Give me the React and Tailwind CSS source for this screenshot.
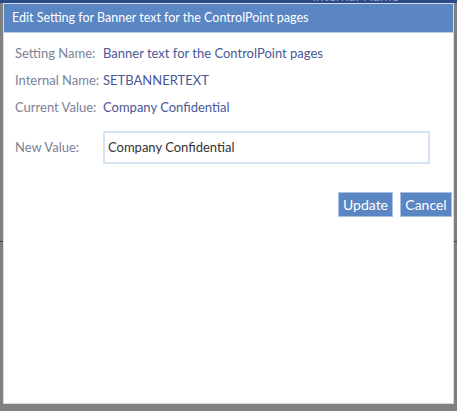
import React from 'react';

const Row = ({ label, value }) => (
  <div className="flex items-center h-[27px]">
    <div className="w-[88px] text-[#7a8298]">{label}</div>
    <div className="text-[#4a5898]">{value}</div>
  </div>
);

export default function App() {
  return (
    <div className="relative w-[457px] h-[411px] bg-[#808080] overflow-hidden font-['Lato',sans-serif] text-[13px]">
      {/* page behind the dialog */}
      <div className="h-[3px] bg-[#2c4a85] overflow-hidden pl-[312px]">
        <div className="text-[#8aa0c8] text-[14px] leading-[14px] -mt-[11px]">Internal Name</div>
      </div>
      <div className="h-[238px]" />
      <div className="h-[1px] bg-[#3c3c3c]" />

      {/* dialog */}
      <div className="absolute left-[3px] top-[3px] w-[451px] h-[401px] bg-white border border-[#d4dbe6] flex flex-col">
        <div className="h-[29px] bg-[#5a86c4] border-b border-[#b9cce6] flex items-center pl-[8px] text-white text-[12.5px]">
          Edit Setting for Banner text for the ControlPoint pages
        </div>
        <div className="pl-[11px] pt-[7px]">
          <Row label="Setting Name:" value="Banner text for the ControlPoint pages" />
          <Row label="Internal Name:" value="SETBANNERTEXT" />
          <Row label="Current Value:" value="Company Confidential" />
          <div className="flex items-center mt-[10px]">
            <div className="w-[88px] text-[#7a8298]">New Value:</div>
            <div className="w-[327px] h-[33px] border-2 border-[#d6e3f2] flex items-center pl-[3px] text-[#333] text-[13px]">
              Company Confidential
            </div>
          </div>
        </div>
        <div className="flex justify-end gap-[7px] pr-[1px] mt-[28px]">
          <button className="h-[25px] w-[55px] bg-[#5a86c4] border border-[#a9c0e2] text-white text-[14px]">Update</button>
          <button className="h-[25px] w-[52px] bg-[#5a86c4] border border-[#a9c0e2] text-white text-[14px]">Cancel</button>
        </div>
      </div>
    </div>
  );
}
